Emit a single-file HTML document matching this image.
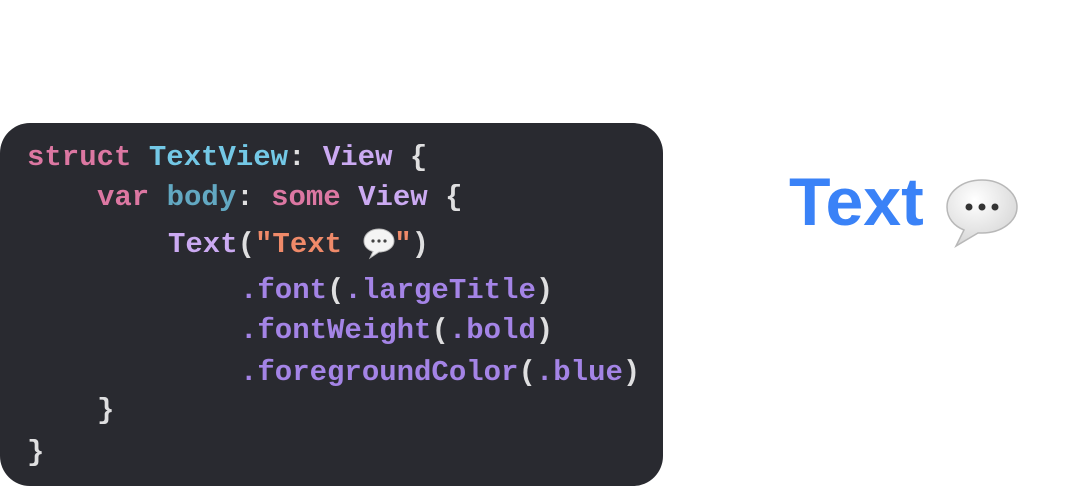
<!DOCTYPE html>
<html><head><meta charset="utf-8"><style>
body{margin:0;width:1080px;height:486px;background:#fff;position:relative;overflow:hidden}
.box{position:absolute;left:0;top:123px;width:663px;height:363px;background:#292a30;border-radius:30px}
.l{position:absolute;font-family:"Liberation Mono",monospace;font-size:29px;font-weight:bold;color:#dfdfe0;white-space:pre;line-height:1}
.k{color:#dc77a2}.t{color:#73c8e6}.v{color:#cbaaf2}.b{color:#62a8c2}.s{color:#ef8a69}.m{color:#a484e6}
.big{position:absolute;left:789px;top:168px;font-family:"Liberation Sans",sans-serif;font-weight:bold;font-size:68px;color:#3a82f7;line-height:1}
</style></head><body>
<div class="box"></div>
<div class="l" style="left:27px;top:143px"><span class="k">struct</span> <span class="t">TextView</span>: <span class="v">View</span> {</div>
<div class="l" style="left:97px;top:183px"><span class="k">var</span> <span class="b">body</span>: <span class="k">some</span> <span class="v">View</span> {</div>
<div class="l" style="left:168px;top:230px"><span class="v">Text</span>(<span class="s">"Text   "</span>)</div>
<svg style="position:absolute;left:362px;top:226px" width="34" height="34" viewBox="0 0 34 34"><path d="M17 3C8 3 2 8.5 2 15c0 5 3.5 9 9 10.5L8 32l9-6c9 0 15-5 15-11S26 3 17 3z" fill="#f4f4f4" stroke="#bbb" stroke-width="1"/><circle cx="11" cy="15" r="1.6" fill="#444"/><circle cx="17" cy="15" r="1.6" fill="#444"/><circle cx="23" cy="15" r="1.6" fill="#444"/></svg>
<div class="l" style="left:240px;top:276px"><span class="m">.font</span>(<span class="m">.largeTitle</span>)</div>
<div class="l" style="left:240px;top:316px"><span class="m">.fontWeight</span>(<span class="m">.bold</span>)</div>
<div class="l" style="left:240px;top:358px"><span class="m">.foregroundColor</span>(<span class="m">.blue</span>)</div>
<div class="l" style="left:97px;top:396px">}</div>
<div class="l" style="left:27px;top:438px">}</div>
<div class="big">Text</div>
<svg style="position:absolute;left:944px;top:178px" width="76" height="70" viewBox="0 0 76 70"><defs><radialGradient id="g" cx="40%" cy="30%" r="75%"><stop offset="0" stop-color="#fff"/><stop offset="1" stop-color="#d4d4d4"/></radialGradient></defs><path d="M38 2C18 2 3 14 3 29c0 11 7 19 17 23l-8 16 22-13c2 0 3 0 4 0 20 0 35-12 35-26S58 2 38 2z" fill="url(#g)" stroke="#b8b8b8" stroke-width="1.5"/><circle cx="25" cy="29" r="3.5" fill="#333"/><circle cx="38" cy="29" r="3.5" fill="#333"/><circle cx="51" cy="29" r="3.5" fill="#333"/></svg>
</body></html>
